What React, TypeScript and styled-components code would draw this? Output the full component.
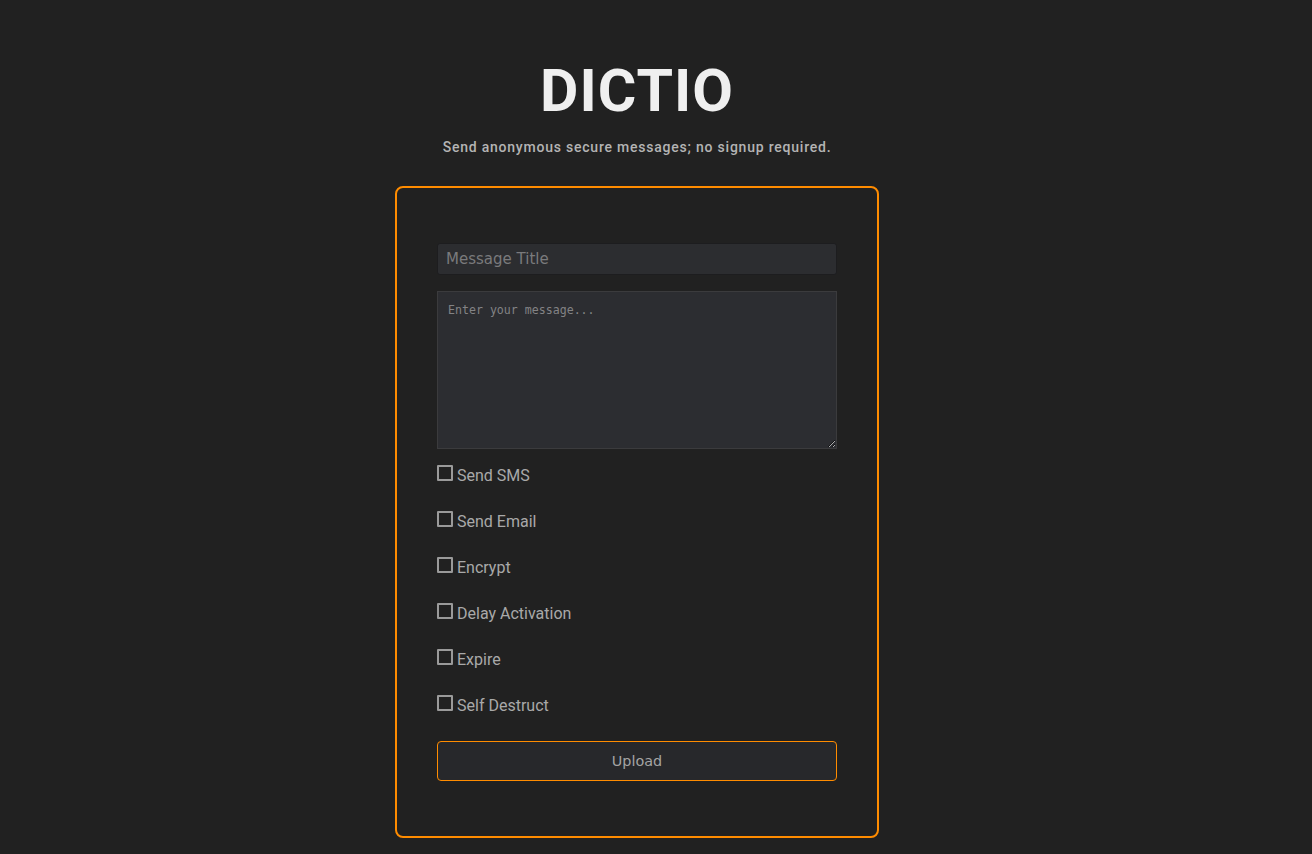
import React from "react";
import styled, { createGlobalStyle } from "styled-components";

const Global = createGlobalStyle`
  html, body { margin: 0; padding: 0; background: #212121; }
  body { font-family: Roboto, "Liberation Sans", sans-serif; }
  * { box-sizing: border-box; }
`;

const Page = styled.main`
  display: flex;
  flex-direction: column;
  align-items: center;
  padding: 56px 38px 16px 0;
  min-height: 854px;
`;

const Title = styled.h1`
  margin: 0;
  font-family: Roboto, sans-serif;
  font-weight: 700;
  font-size: 59px;
  line-height: 70px;
  letter-spacing: 1px;
  color: #efefef;
`;

const Subtitle = styled.p`
  margin: 11px 0 0;
  font-family: Roboto, sans-serif;
  font-weight: 500;
  font-size: 14px;
  line-height: 20px;
  letter-spacing: 0.78px;
  color: #b4b4b4;
`;

const Card = styled.form`
  margin-top: 29px;
  width: 484px;
  border: 2px solid #ff8c00;
  border-radius: 8px;
  padding: 55px 40px;
  display: flex;
  flex-direction: column;
`;

const TitleInput = styled.input`
  height: 32px;
  width: 100%;
  background: #2c2d30;
  border: 1px solid #1d1d1f;
  border-radius: 3px;
  padding: 0 8px;
  font-family: "DejaVu Sans", sans-serif;
  font-size: 15px;
  color: #ddd;
  outline: none;
  &::placeholder { color: #7a7a7c; }
`;

const MessageArea = styled.textarea`
  margin-top: 16px;
  height: 158px;
  width: 100%;
  background: #2c2d31;
  border: 1px solid #3b3b3d;
  border-radius: 0;
  padding: 11px 10px 10px;
  font-family: "DejaVu Sans Mono", monospace;
  font-size: 11.6px;
  color: #ddd;
  outline: none;
  resize: vertical;
  &::placeholder { color: #838385; }
`;

const Options = styled.div`
  display: flex;
  flex-direction: column;
  margin-top: 3px;
`;

const OptionRow = styled.label`
  display: flex;
  align-items: center;
  height: 46px;
  gap: 4px;
  font-family: Roboto, sans-serif;
  font-size: 16px;
  color: #a9a9a9;
  cursor: pointer;
`;

const Box = styled.input.attrs({ type: "checkbox" })`
  appearance: none;
  margin: 0 0 4px 0;
  width: 16px;
  height: 16px;
  border: 2px solid #9a9a9a;
  border-radius: 1px;
  background: transparent;
  flex: none;
`;

const UploadButton = styled.button`
  margin-top: 13px;
  height: 40px;
  width: 100%;
  background: #27282b;
  border: 1px solid #ff8c00;
  border-radius: 4px;
  font-family: "DejaVu Sans", sans-serif;
  font-size: 14.4px;
  color: #a4a4a4;
  cursor: pointer;
`;

const options = ["Send SMS", "Send Email", "Encrypt", "Delay Activation", "Expire", "Self Destruct"];

export default function App() {
  return (
    <>
      <Global />
      <Page>
        <Title>DICTIO</Title>
        <Subtitle>Send anonymous secure messages; no signup required.</Subtitle>
        <Card onSubmit={(e) => e.preventDefault()}>
          <TitleInput placeholder="Message Title" />
          <MessageArea placeholder="Enter your message..." />
          <Options>
            {options.map((o) => (
              <OptionRow key={o}>
                <Box />
                {o}
              </OptionRow>
            ))}
          </Options>
          <UploadButton type="submit">Upload</UploadButton>
        </Card>
      </Page>
    </>
  );
}
